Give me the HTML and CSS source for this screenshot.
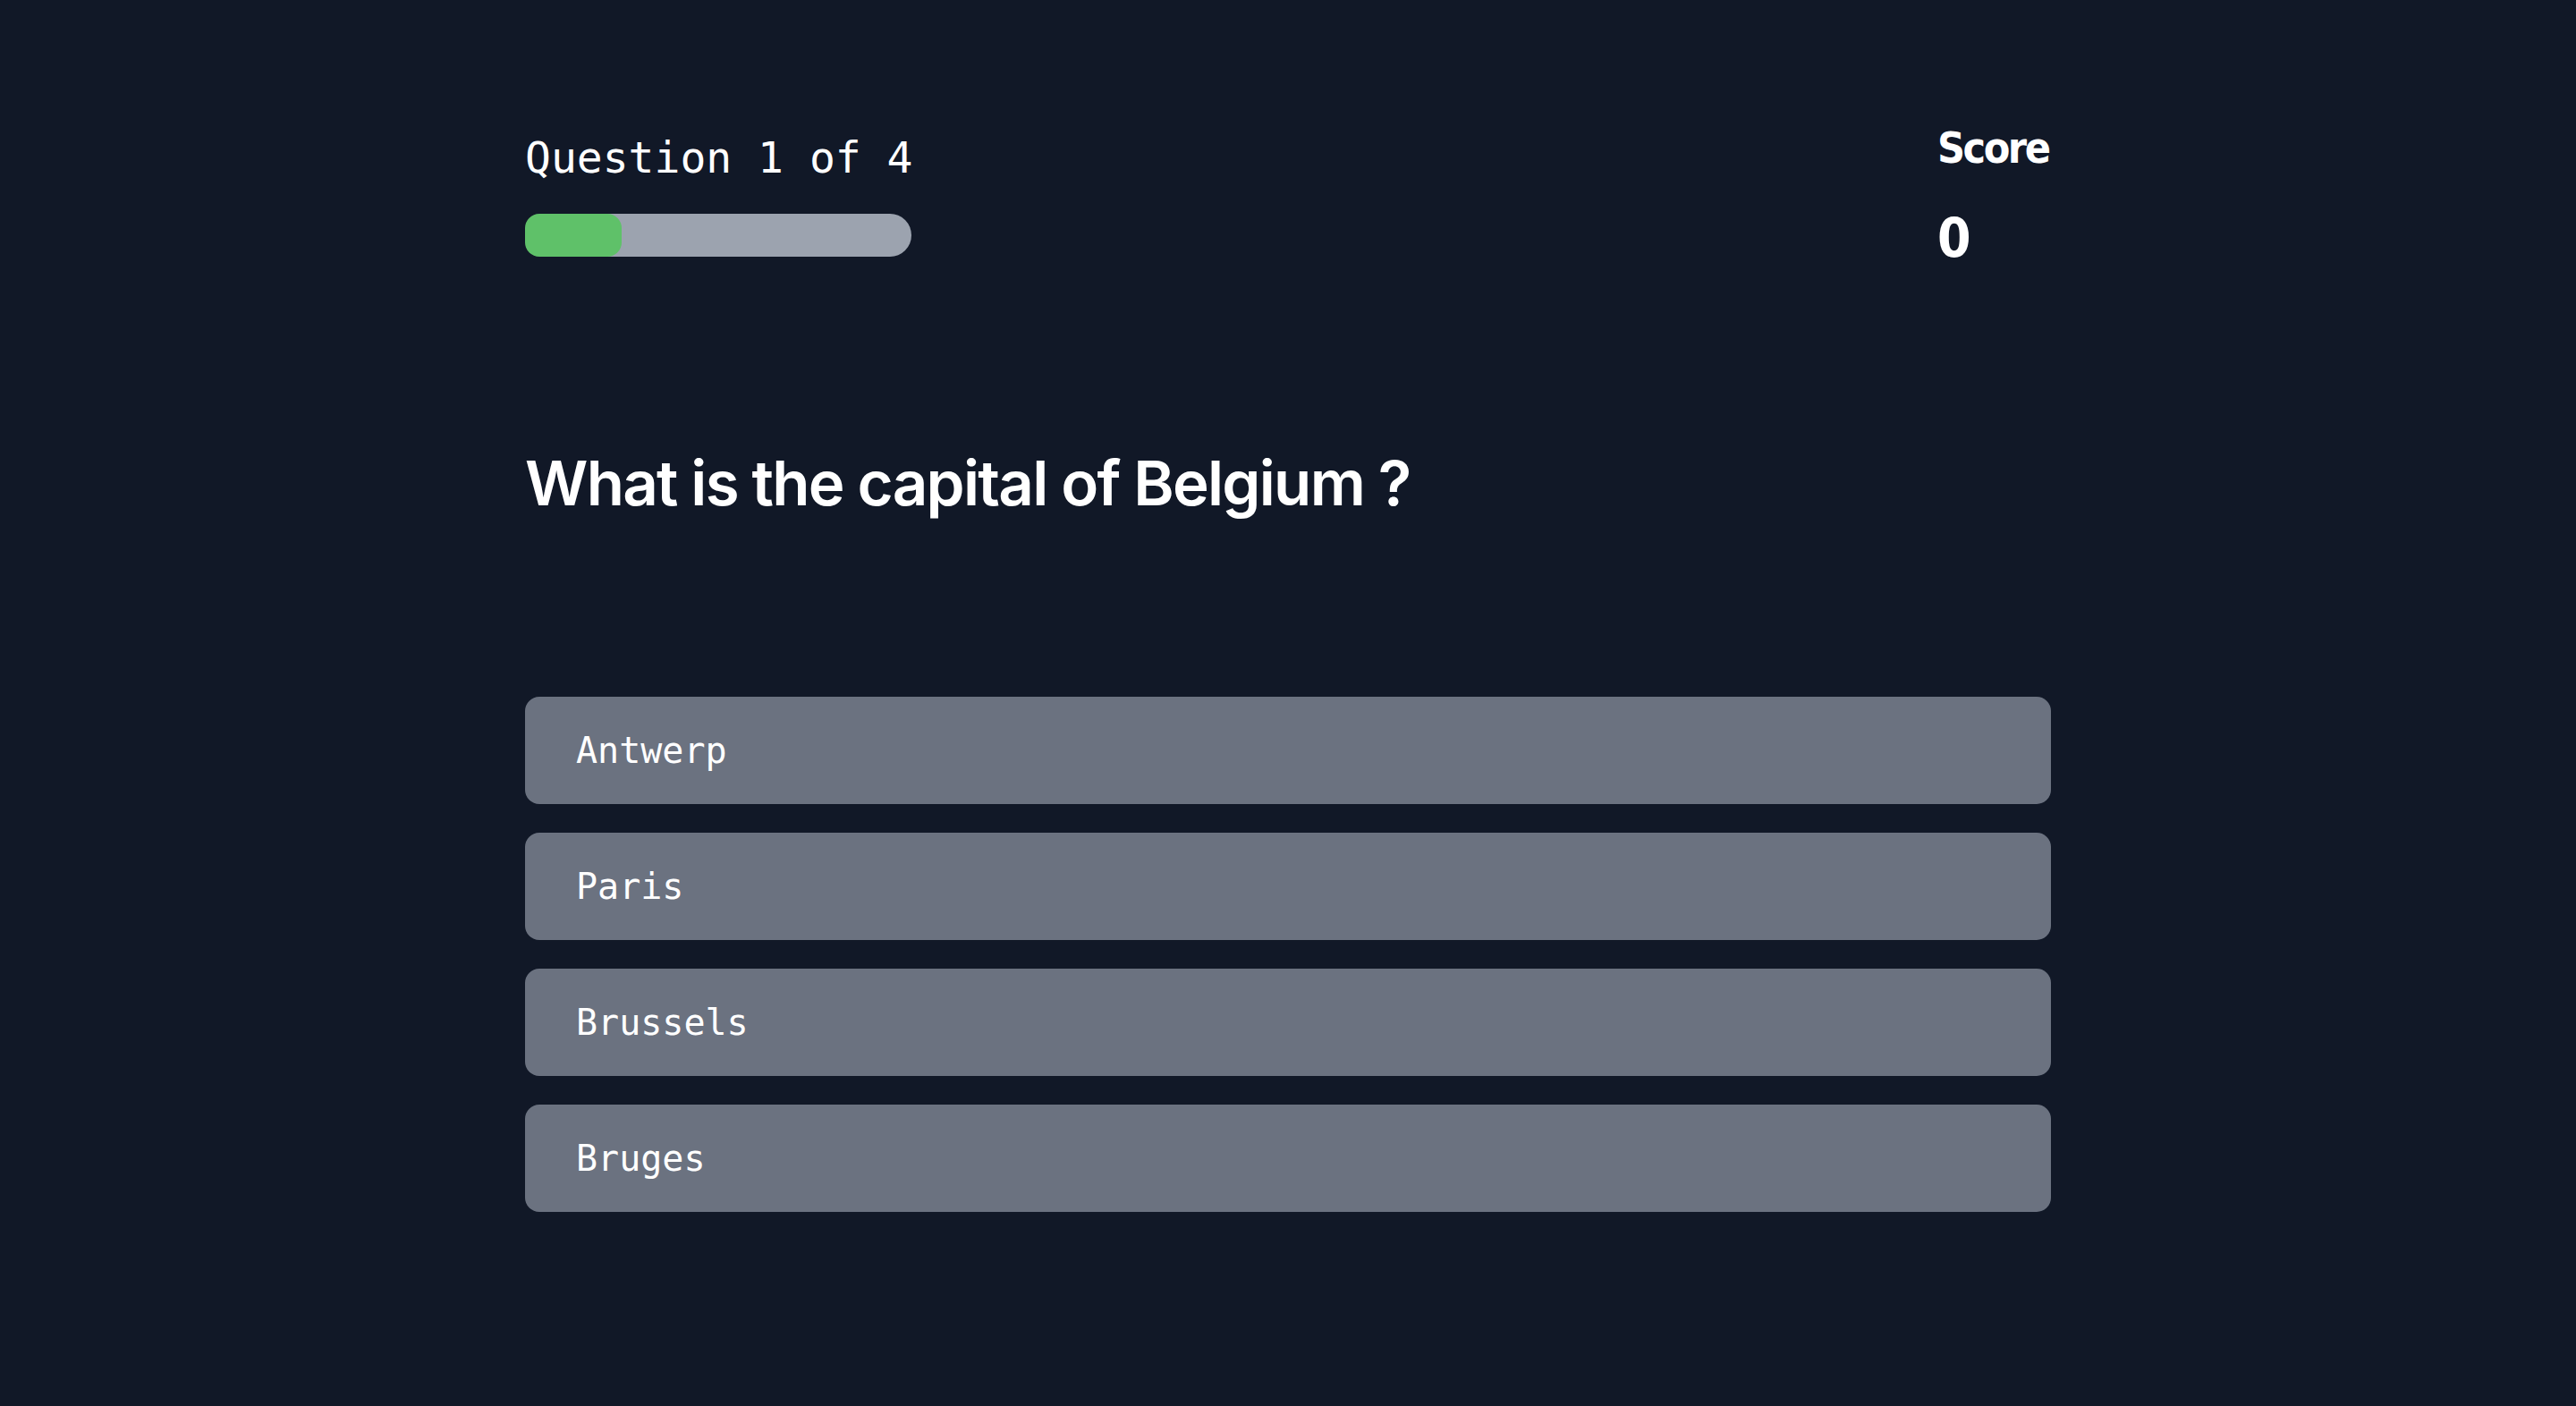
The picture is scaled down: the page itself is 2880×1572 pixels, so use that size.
FILE: index.html
```html
<!DOCTYPE html>
<html lang="en">
<head>
<meta charset="utf-8">
<title>Quiz</title>
<link rel="stylesheet" href="styles.css">
</head>
<body>
<main class="quiz">
  <header class="quiz-header">
    <div class="progress-block">
      <p class="progress-label">Question 1 of 4</p>
      <div class="progress-bar"><div class="progress-fill" style="width:25%"></div></div>
    </div>
    <div class="score-block">
      <p class="score-label">Score</p>
      <p class="score-value">0</p>
    </div>
  </header>
  <h1 class="question">What is the capital of Belgium ?</h1>
  <ul class="options">
    <li class="option">Antwerp</li>
    <li class="option">Paris</li>
    <li class="option">Brussels</li>
    <li class="option">Bruges</li>
  </ul>
</main>
</body>
</html>
```

FILE: styles.css
```css
html, body {
  margin: 0;
  padding: 0;
  background: #111827;
  color: #ffffff;
}
body {
  min-height: 1572px;
}
.quiz {
  width: 1706px;
  margin: 0 auto;
  padding-top: 141px;
  box-sizing: border-box;
}
.quiz-header {
  display: flex;
  justify-content: space-between;
  align-items: flex-start;
}
.progress-block {
  padding-top: 11px;
}
.progress-label {
  margin: 0;
  font-family: "DejaVu Sans Mono", "Liberation Mono", monospace;
  font-size: 48px;
  line-height: 1;
  color: #ffffff;
}
.progress-bar {
  margin-top: 39px;
  width: 432px;
  height: 48px;
  border-radius: 24px;
  background: #9ca3af;
}
.progress-fill {
  height: 100%;
  border-radius: 16px;
  background: #5fc169;
}
.score-block {
  width: 127px;
  white-space: nowrap;
}
.score-label {
  margin: 0;
  font-family: "DejaVu Sans Condensed", "DejaVu Sans", sans-serif;
  font-stretch: condensed;
  font-weight: 700;
  font-size: 48px;
  line-height: 1;
  letter-spacing: -2.5px;
}
.score-value {
  margin: 47px 0 0;
  font-family: "DejaVu Sans Condensed", "DejaVu Sans", sans-serif;
  font-stretch: condensed;
  font-weight: 700;
  font-size: 60px;
  line-height: 1;
}
.question {
  margin: 210px 0 0;
  font-family: Inter, "Noto Sans", sans-serif;
  font-weight: 600;
  font-size: 69px;
  line-height: 1;
  letter-spacing: -0.025em;
}
.options {
  list-style: none;
  margin: 204px 0 0;
  padding: 0;
  display: flex;
  flex-direction: column;
  gap: 32px;
}
.option {
  height: 120px;
  display: flex;
  align-items: center;
  padding-left: 57px;
  border-radius: 16px;
  background: #6b7280;
  font-family: "DejaVu Sans Mono", "Liberation Mono", monospace;
  font-size: 40px;
  color: #ffffff;
}
```
